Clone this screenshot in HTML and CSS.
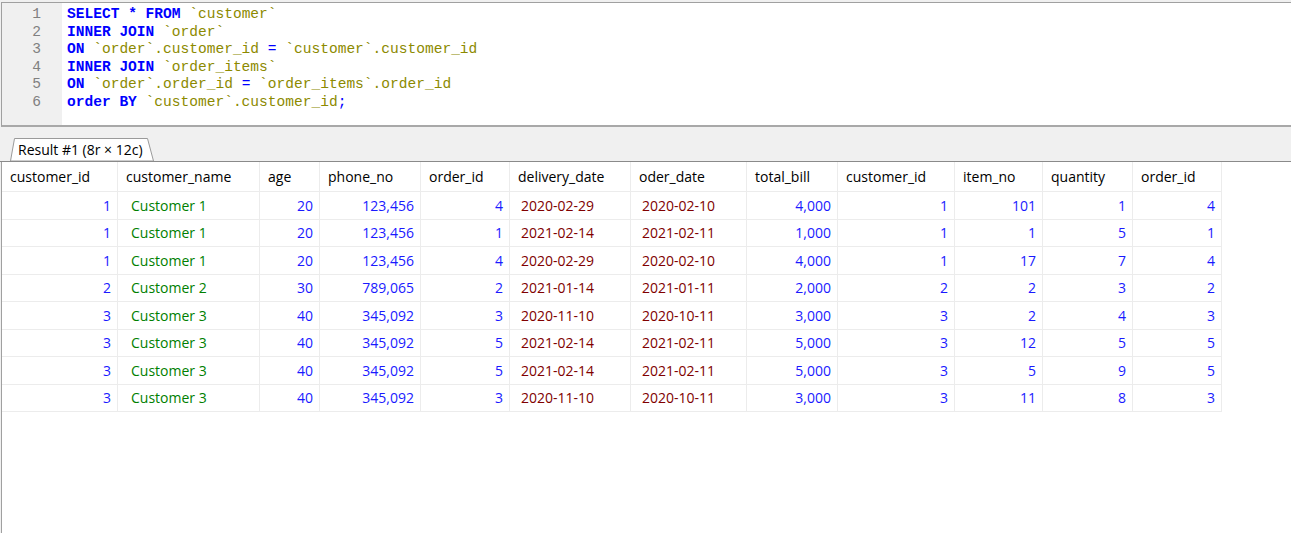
FILE: index.html
```html
<!DOCTYPE html>
<html>
<head>
<meta charset="utf-8">
<link rel="stylesheet" href="styles.css">
</head>
<body>
<div class="app">
  <div class="editor">
    <div class="gutter">
      <div class="ln">1</div><div class="ln">2</div><div class="ln">3</div><div class="ln">4</div><div class="ln">5</div><div class="ln">6</div>
    </div>
    <div class="code">
      <div class="line"><span class="kw">SELECT</span> <span class="kw">*</span> <span class="kw">FROM</span> <span class="id">`customer`</span></div>
      <div class="line"><span class="kw">INNER</span> <span class="kw">JOIN</span> <span class="id">`order`</span></div>
      <div class="line"><span class="kw">ON</span> <span class="id">`order`.customer_id</span> <span class="op">=</span> <span class="id">`customer`.customer_id</span></div>
      <div class="line"><span class="kw">INNER</span> <span class="kw">JOIN</span> <span class="id">`order_items`</span></div>
      <div class="line"><span class="kw">ON</span> <span class="id">`order`.order_id</span> <span class="op">=</span> <span class="id">`order_items`.order_id</span></div>
      <div class="line"><span class="kw">order</span> <span class="kw">BY</span> <span class="id">`customer`.customer_id</span><span class="op">;</span></div>
    </div>
  </div>
  <div class="tabbar">
    <div class="tab">
      <svg class="tabshape" width="144" height="23" viewBox="0 0 144 23"><polygon points="0.5,23 4.5,0.5 137.5,0.5 143.5,23" fill="#ffffff" stroke="#9a9a9a" stroke-width="1"/></svg>
      <span class="tablabel">Result #1 (8r × 12c)</span>
    </div>
  </div>
  <div class="results">
    <div class="grid">
      <div class="h">customer_id</div><div class="h">customer_name</div><div class="h">age</div><div class="h">phone_no</div><div class="h">order_id</div><div class="h">delivery_date</div><div class="h">oder_date</div><div class="h">total_bill</div><div class="h">customer_id</div><div class="h">item_no</div><div class="h">quantity</div><div class="h">order_id</div>

      <div class="n">1</div><div class="s">Customer 1</div><div class="n">20</div><div class="n">123,456</div><div class="n">4</div><div class="d">2020-02-29</div><div class="d">2020-02-10</div><div class="n">4,000</div><div class="n">1</div><div class="n">101</div><div class="n">1</div><div class="n">4</div>

      <div class="n">1</div><div class="s">Customer 1</div><div class="n">20</div><div class="n">123,456</div><div class="n">1</div><div class="d">2021-02-14</div><div class="d">2021-02-11</div><div class="n">1,000</div><div class="n">1</div><div class="n">1</div><div class="n">5</div><div class="n">1</div>

      <div class="n">1</div><div class="s">Customer 1</div><div class="n">20</div><div class="n">123,456</div><div class="n">4</div><div class="d">2020-02-29</div><div class="d">2020-02-10</div><div class="n">4,000</div><div class="n">1</div><div class="n">17</div><div class="n">7</div><div class="n">4</div>

      <div class="n">2</div><div class="s">Customer 2</div><div class="n">30</div><div class="n">789,065</div><div class="n">2</div><div class="d">2021-01-14</div><div class="d">2021-01-11</div><div class="n">2,000</div><div class="n">2</div><div class="n">2</div><div class="n">3</div><div class="n">2</div>

      <div class="n">3</div><div class="s">Customer 3</div><div class="n">40</div><div class="n">345,092</div><div class="n">3</div><div class="d">2020-11-10</div><div class="d">2020-10-11</div><div class="n">3,000</div><div class="n">3</div><div class="n">2</div><div class="n">4</div><div class="n">3</div>

      <div class="n">3</div><div class="s">Customer 3</div><div class="n">40</div><div class="n">345,092</div><div class="n">5</div><div class="d">2021-02-14</div><div class="d">2021-02-11</div><div class="n">5,000</div><div class="n">3</div><div class="n">12</div><div class="n">5</div><div class="n">5</div>

      <div class="n">3</div><div class="s">Customer 3</div><div class="n">40</div><div class="n">345,092</div><div class="n">5</div><div class="d">2021-02-14</div><div class="d">2021-02-11</div><div class="n">5,000</div><div class="n">3</div><div class="n">5</div><div class="n">9</div><div class="n">5</div>

      <div class="n">3</div><div class="s">Customer 3</div><div class="n">40</div><div class="n">345,092</div><div class="n">3</div><div class="d">2020-11-10</div><div class="d">2020-10-11</div><div class="n">3,000</div><div class="n">3</div><div class="n">11</div><div class="n">8</div><div class="n">3</div>
    </div>
  </div>
</div>
</body>
</html>
```

FILE: styles.css
```css
* { box-sizing: border-box; }
html, body { margin: 0; padding: 0; }
body {
  background: #ffffff;
  width: 1291px;
  height: 533px;
  overflow: hidden;
  font-family: "Open Sans", "Noto Sans", sans-serif;
}
.app {
  display: flex;
  flex-direction: column;
  height: 533px;
  background: #f0f0f0;
}
.editor {
  display: flex;
  margin-top: 2px;
  margin-left: 1px;
  height: 125px;
  background: #ffffff;
  border-top: 1px solid #a0a0a0;
  border-left: 1px solid #a0a0a0;
  border-bottom: 2px solid #a8a8a8;
  font-family: "Liberation Mono", "DejaVu Sans Mono", monospace;
  font-size: 14.55px;
  line-height: 17.5px;
}
.gutter {
  width: 60px;
  background: #f0f0f0;
  padding-top: 3px;
  padding-right: 21px;
  text-align: right;
  color: #808080;
}
.code {
  padding-top: 3px;
  padding-left: 5px;
  color: #808000;
}
.line { white-space: pre; }
.kw { color: #0000ff; font-weight: bold; }
.id { color: #8c8a00; }
.op { color: #0000ff; }
.tabbar {
  height: 35px;
  display: flex;
  align-items: flex-end;
  padding-left: 10px;
  border-bottom: 1px solid #8a8a8a;
}
.tab {
  position: relative;
  width: 144px;
  height: 23px;
  display: flex;
  align-items: center;
}
.tabshape {
  position: absolute;
  left: 0;
  top: 0;
}
.tablabel {
  position: relative;
  padding-left: 8px;
  font-size: 14px;
  color: #000000;
  white-space: nowrap;
}
.results {
  flex: 1;
  background: #ffffff;
  border-left: 1px solid #a0a0a0;
  margin-left: 1px;
}
.grid {
  display: grid;
  grid-template-columns: 116px 142px 60px 101px 89px 121px 116px 91px 117px 88px 90px 89px;
  grid-template-rows: 30px repeat(8, 27.5px);
  font-size: 14px;
}
.grid > div {
  border-right: 1px solid #ececec;
  border-bottom: 1px solid #ececec;
  display: flex;
  align-items: center;
  white-space: nowrap;
  overflow: hidden;
}
.h {
  color: #000000;
  padding-left: 8px;
}
.n {
  color: #1a1aff;
  justify-content: flex-end;
  padding-right: 6px;
}
.s {
  color: #008000;
  padding-left: 13px;
}
.d {
  color: #800000;
  padding-left: 11px;
}
```
